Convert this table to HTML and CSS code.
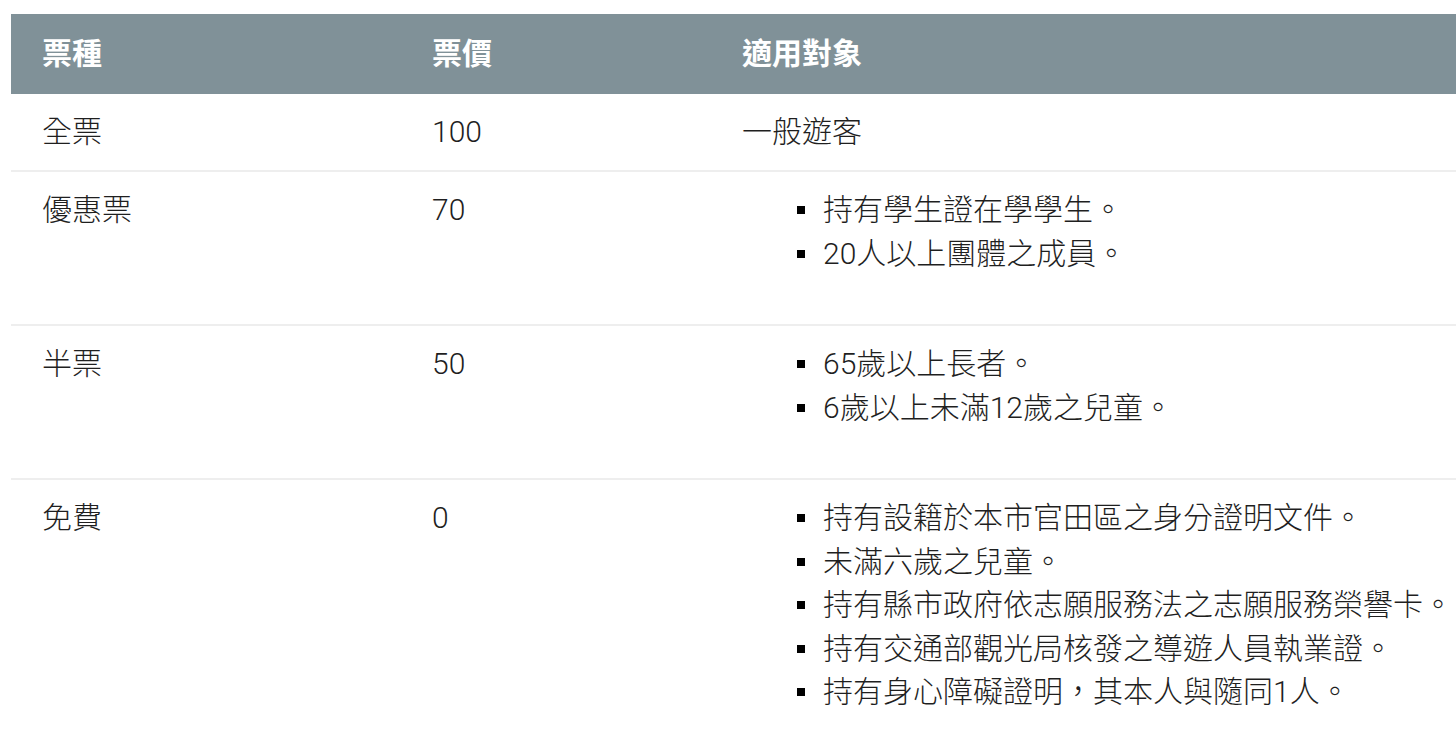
FILE: index.html
```html
<!DOCTYPE html>
<html lang="zh-Hant">
<head>
<meta charset="utf-8">
<title>票價</title>
<link rel="stylesheet" href="styles.css">
</head>
<body>
<div class="wrap">
<table class="fare">
  <colgroup>
    <col class="c1">
    <col class="c2">
    <col class="c3">
  </colgroup>
  <thead>
    <tr><th>票種</th><th>票價</th><th>適用對象</th></tr>
  </thead>
  <tbody>
    <tr><td>全票</td><td>100</td><td>一般遊客</td></tr>
    <tr><td>優惠票</td><td>70</td><td>
      <ul class="list">
        <li>持有學生證在學學生。</li>
        <li>20人以上團體之成員。</li>
      </ul></td></tr>
    <tr><td>半票</td><td>50</td><td>
      <ul class="list">
        <li>65歲以上長者。</li>
        <li>6歲以上未滿12歲之兒童。</li>
      </ul></td></tr>
    <tr><td>免費</td><td>0</td><td>
      <ul class="list">
        <li>持有設籍於本市官田區之身分證明文件。</li>
        <li>未滿六歲之兒童。</li>
        <li>持有縣市政府依志願服務法之志願服務榮譽卡。</li>
        <li>持有交通部觀光局核發之導遊人員執業證。</li>
        <li>持有身心障礙證明，其本人與隨同1人。</li>
      </ul></td></tr>
  </tbody>
</table>
</div>
</body>
</html>
```
FILE: styles.css
```css
html, body {
  margin: 0;
  padding: 0;
  overflow: hidden;
  background: #fff;
}
body {
  font-family: Roboto, "Noto Sans CJK TC", sans-serif;
  color: #1f1f1f;
}
.wrap {
  padding: 14px 0 0 11px;
}
.fare {
  width: 1445px;
  border-collapse: collapse;
  table-layout: fixed;
  font-size: 30px;
  line-height: 43.5px;
  font-weight: 300;
}
.c1 { width: 390px; }
.c2 { width: 310px; }
.fare th {
  background: #809198;
  color: #fff;
  font-weight: 700;
  text-align: left;
  height: 80px;
  padding: 0 31px;
  vertical-align: middle;
}
.fare td {
  padding: 16px 31px 18px;
  vertical-align: top;
  border-bottom: 2px solid #eeeeee;
}
.fare tbody tr:first-child td { padding-bottom: 16.5px; }
.list {
  list-style: none;
  margin: 0 0 31px;
  padding: 0 0 0 55px;
}
.list li {
  white-space: nowrap;
}
.list li::before {
  content: "";
  display: inline-block;
  width: 8px;
  height: 8px;
  background: #000;
  margin-right: 18px;
  vertical-align: middle;
  position: relative;
  top: -2px;
}
```
